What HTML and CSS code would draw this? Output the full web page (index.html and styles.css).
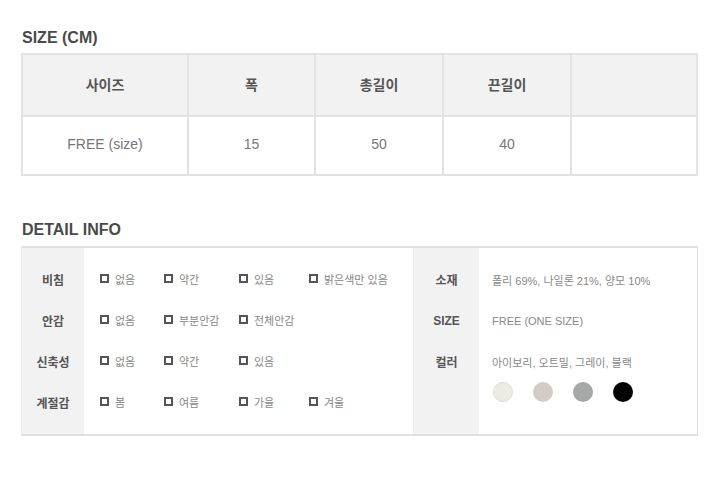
FILE: index.html
```html
<!DOCTYPE html>
<html lang="ko">
<head>
<meta charset="utf-8">
<title>Size / Detail</title>
<link rel="stylesheet" href="styles.css">
</head>
<body>
<div class="page">
  <h2 class="title">SIZE (CM)</h2>
  <div class="size-table">
    <div class="cell head">사이즈</div>
    <div class="cell head">폭</div>
    <div class="cell head">총길이</div>
    <div class="cell head">끈길이</div>
    <div class="cell head"></div>
    <div class="cell body">FREE (size)</div>
    <div class="cell body">15</div>
    <div class="cell body">50</div>
    <div class="cell body">40</div>
    <div class="cell body"></div>
  </div>

  <h2 class="title title-detail">DETAIL INFO</h2>
  <div class="detail">
    <div class="label-col">
      <div class="row label">비침</div>
      <div class="row label">안감</div>
      <div class="row label">신축성</div>
      <div class="row label">계절감</div>
    </div>
    <div class="opt-col">
      <div class="row opts">
        <span class="opt"><i class="box"></i>없음</span>
        <span class="opt"><i class="box"></i>약간</span>
        <span class="opt"><i class="box"></i>있음</span>
        <span class="opt"><i class="box"></i>밝은색만 있음</span>
      </div>
      <div class="row opts">
        <span class="opt"><i class="box"></i>없음</span>
        <span class="opt"><i class="box"></i>부분안감</span>
        <span class="opt"><i class="box"></i>전체안감</span>
      </div>
      <div class="row opts">
        <span class="opt"><i class="box"></i>없음</span>
        <span class="opt"><i class="box"></i>약간</span>
        <span class="opt"><i class="box"></i>있음</span>
      </div>
      <div class="row opts">
        <span class="opt"><i class="box"></i>봄</span>
        <span class="opt"><i class="box"></i>여름</span>
        <span class="opt"><i class="box"></i>가을</span>
        <span class="opt"><i class="box"></i>겨울</span>
      </div>
    </div>
    <div class="label-col label-col-r">
      <div class="row label">소재</div>
      <div class="row label">SIZE</div>
      <div class="row label">컬러</div>
    </div>
    <div class="val-col">
      <div class="row val">폴리 69%, 나일론 21%, 양모 10%</div>
      <div class="row val">FREE (ONE SIZE)</div>
      <div class="row val">아이보리, 오트밀, 그레이, 블랙</div>
      <div class="swatches">
        <span class="dot dot-ivory"></span>
        <span class="dot dot-oat"></span>
        <span class="dot dot-gray"></span>
        <span class="dot dot-black"></span>
      </div>
    </div>
  </div>
</div>
</body>
</html>
```

FILE: styles.css
```css
* { box-sizing: border-box; }
html, body { margin: 0; padding: 0; background: #fff; }
body {
  font-family: "Liberation Sans", "Noto Sans CJK KR", sans-serif;
  color: #555;
}
.page {
  padding: 28px 22px 0 21px;
  width: 720px;
}
.title {
  margin: 0 0 5px 1px;
  height: 20px;
  line-height: 20px;
  font-size: 16px;
  font-weight: bold;
  color: #4a4a4a;
}
.title-detail {
  margin-top: 44px;
  margin-bottom: 6px;
}
.size-table {
  width: 677px;
  display: grid;
  grid-template-columns: 166px 127px 128px 128px 126px;
  grid-template-rows: 62px 59px;
  border-top: 2px solid #e2e2e2;
  border-left: 2px solid #e2e2e2;
}
.size-table .cell {
  display: flex;
  align-items: center;
  justify-content: center;
  padding-bottom: 3px;
  border-right: 2px solid #e2e2e2;
  border-bottom: 2px solid #e2e2e2;
}
.size-table .head {
  background: #f2f2f2;
  font-size: 14px;
  font-weight: bold;
  color: #555;
}
.size-table .body {
  font-size: 14px;
  color: #777;
}
.detail {
  width: 677px;
  display: flex;
  border-top: 2px solid #e0e0e0;
  border-bottom: 2px solid #e0e0e0;
  border-right: 1px solid #e0e0e0;
  border-left: 1px solid #ececec;
  height: 190px;
}
.label-col {
  width: 62px;
  background: #f2f2f2;
  padding: 11px 0;
}
.label-col-r {
  width: 66px;
  border-left: 1px solid #ececec;
}
.row {
  height: 41px;
  display: flex;
  align-items: center;
}
.label {
  justify-content: center;
  font-size: 12px;
  font-weight: bold;
  color: #555;
}
.opt-col {
  width: 329px;
  padding: 10px 0 11px 16px;
}
.opts {
  display: grid;
  grid-template-columns: 64px 75px 70px auto;
  align-items: center;
}
.opt {
  display: flex;
  align-items: center;
  font-size: 11px;
  color: #888;
}
.box {
  display: block;
  width: 9px;
  height: 9px;
  border: 2px solid #555;
  margin-right: 6px;
}
.val-col {
  flex: 1;
  padding: 11px 0 0 13px;
}
.val {
  font-size: 11px;
  color: #888;
}
.swatches {
  display: flex;
  gap: 20px;
  margin-left: 1px;
  height: 20px;
}
.dot {
  display: block;
  width: 20px;
  height: 20px;
  border-radius: 50%;
}
.dot-ivory { background: #eeebe3; border: 1px solid #e0dcd3; }
.dot-oat { background: #d3cbc4; }
.dot-gray { background: #a6a7a7; }
.dot-black { background: #000; }
```
